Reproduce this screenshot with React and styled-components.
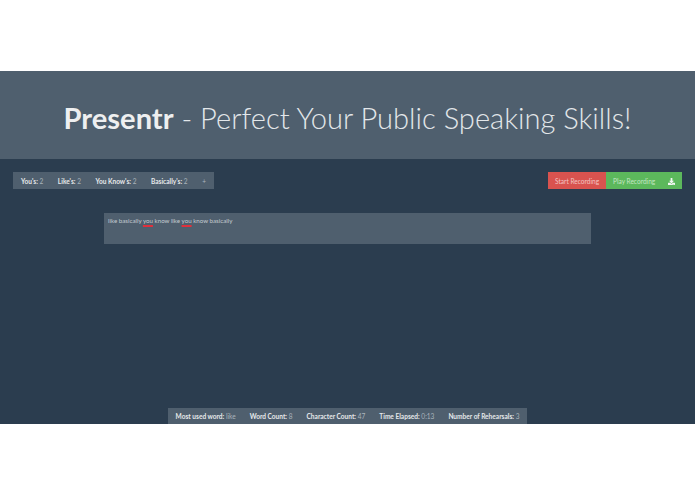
import React from 'react';
import styled, { createGlobalStyle } from 'styled-components';
import { FaDownload } from 'react-icons/fa';

const GlobalStyle = createGlobalStyle`
  html, body {
    margin: 0;
    padding: 0;
    background: #fff;
    font-family: Lato, "Open Sans", sans-serif;
  }
`;

const Page = styled.div`
  width: 695px;
  height: 494px;
  padding: 71px 0 70px;
  box-sizing: border-box;
  display: flex;
  flex-direction: column;
  overflow: hidden;
`;

const Hero = styled.header`
  height: 88px;
  flex: none;
  padding-top: 4px;
  box-sizing: border-box;
  background: #4f5f6e;
  display: flex;
  align-items: center;
  justify-content: center;
`;

const Title = styled.h1`
  margin: 0;
  font-size: 29.1px;
  font-weight: 300;
  color: #e3e7ea;
  white-space: nowrap;
  strong {
    font-weight: 700;
    color: #eeeff0;
  }
`;

const Main = styled.main`
  flex: 1;
  background: #2b3d4f;
  display: flex;
  flex-direction: column;
  padding: 13px 13px 0;
  box-sizing: border-box;
`;

const TopRow = styled.div`
  display: flex;
  justify-content: space-between;
`;

const Bar = styled.div`
  height: 17px;
  background: #4f5f6e;
  display: flex;
  align-items: center;
  gap: ${p => p.$gap}px;
  padding: ${p => p.$nudge}px 8px 0;
  box-sizing: border-box;
  font-size: 6.55px;
  color: #aab4bc;
  white-space: nowrap;
  b {
    font-weight: 700;
    color: #e6e9eb;
  }
`;

const Actions = styled.div`
  display: flex;
  height: 17px;
  font-size: 6.55px;
  white-space: nowrap;
`;

const Action = styled.div`
  background: ${p => p.$bg};
  color: ${p => p.$color};
  width: ${p => p.$width}px;
  box-sizing: border-box;
  padding: 1px 7px 0;
  display: flex;
  align-items: center;
  justify-content: space-between;
  svg {
    width: 7px;
    height: 7px;
    color: #f2f7f2;
  }
`;

const Editor = styled.div`
  width: 487px;
  height: 31px;
  margin: 24px 0 0 91px;
  padding: 4px;
  box-sizing: border-box;
  background: #4f5f6e;
  font-size: 6.2px;
  color: #c3cad0;
  white-space: nowrap;
`;

const Flagged = styled.span`
  text-decoration: underline solid #e0303c 1.5px;
  text-underline-offset: 2px;
`;

const Stats = styled(Bar)`
  height: 16px;
  margin-top: auto;
  align-self: center;
`;

export default function App() {
  return (
    <Page>
      <GlobalStyle />
      <Hero>
        <Title><strong>Presentr</strong> - Perfect Your Public Speaking Skills!</Title>
      </Hero>
      <Main>
        <TopRow>
          <Bar $gap={14.5} $nudge={1}>
            <span><b>You's:</b> 2</span>
            <span><b>Like's:</b> 2</span>
            <span><b>You Know's:</b> 2</span>
            <span><b>Basically's:</b> 2</span>
            <span>+</span>
          </Bar>
          <Actions>
            <Action $bg="#d9534f" $color="#f3c4c2" $width={58}>Start Recording</Action>
            <Action $bg="#5cb85c" $color="#c4e6c4" $width={76}>
              Play Recording
              <FaDownload />
            </Action>
          </Actions>
        </TopRow>
        <Editor>
          like basically <Flagged>you</Flagged> know like <Flagged>you</Flagged> know basically
        </Editor>
        <Stats $gap={14} $nudge={0}>
          <span><b>Most used word:</b> like</span>
          <span><b>Word Count:</b> 8</span>
          <span><b>Character Count:</b> 47</span>
          <span><b>Time Elapsed:</b> 0:13</span>
          <span><b>Number of Rehearsals:</b> 3</span>
        </Stats>
      </Main>
    </Page>
  );
}
